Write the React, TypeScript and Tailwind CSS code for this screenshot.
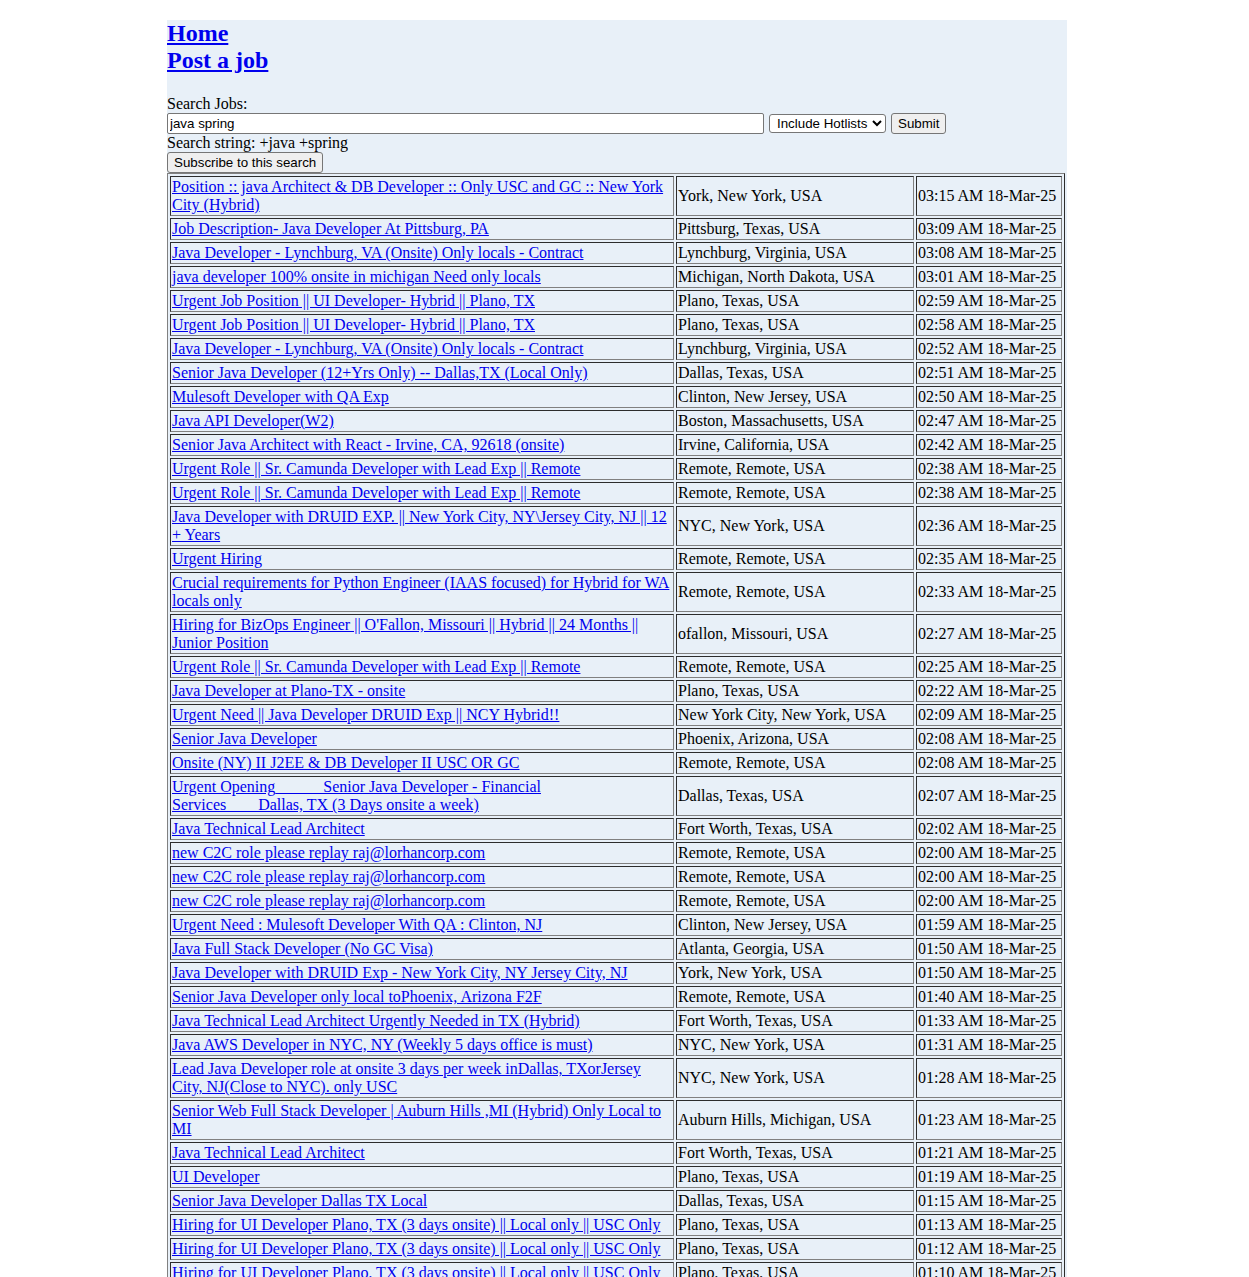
import React from "react";

const jobs: [string, string, string][] = [
  ["Position :: java Architect & DB Developer :: Only USC and GC :: New York City (Hybrid)", "York, New York, USA", "03:15 AM 18-Mar-25"],
  ["Job Description- Java Developer At Pittsburg, PA", "Pittsburg, Texas, USA", "03:09 AM 18-Mar-25"],
  ["Java Developer - Lynchburg, VA (Onsite) Only locals - Contract", "Lynchburg, Virginia, USA", "03:08 AM 18-Mar-25"],
  ["java developer 100% onsite in michigan Need only locals", "Michigan, North Dakota, USA", "03:01 AM 18-Mar-25"],
  ["Urgent Job Position || UI Developer- Hybrid || Plano, TX", "Plano, Texas, USA", "02:59 AM 18-Mar-25"],
  ["Urgent Job Position || UI Developer- Hybrid || Plano, TX", "Plano, Texas, USA", "02:58 AM 18-Mar-25"],
  ["Java Developer - Lynchburg, VA (Onsite) Only locals - Contract", "Lynchburg, Virginia, USA", "02:52 AM 18-Mar-25"],
  ["Senior Java Developer (12+Yrs Only) -- Dallas,TX (Local Only)", "Dallas, Texas, USA", "02:51 AM 18-Mar-25"],
  ["Mulesoft Developer with QA Exp", "Clinton, New Jersey, USA", "02:50 AM 18-Mar-25"],
  ["Java API Developer(W2)", "Boston, Massachusetts, USA", "02:47 AM 18-Mar-25"],
  ["Senior Java Architect with React - Irvine, CA, 92618 (onsite)", "Irvine, California, USA", "02:42 AM 18-Mar-25"],
  ["Urgent Role || Sr. Camunda Developer with Lead Exp || Remote", "Remote, Remote, USA", "02:38 AM 18-Mar-25"],
  ["Urgent Role || Sr. Camunda Developer with Lead Exp || Remote", "Remote, Remote, USA", "02:38 AM 18-Mar-25"],
  ["Java Developer with DRUID EXP. || New York City, NY\\Jersey City, NJ || 12 + Years", "NYC, New York, USA", "02:36 AM 18-Mar-25"],
  ["Urgent Hiring", "Remote, Remote, USA", "02:35 AM 18-Mar-25"],
  ["Crucial requirements for Python Engineer (IAAS focused) for Hybrid for WA locals only", "Remote, Remote, USA", "02:33 AM 18-Mar-25"],
  ["Hiring for BizOps Engineer || O'Fallon, Missouri || Hybrid || 24 Months || Junior Position", "ofallon, Missouri, USA", "02:27 AM 18-Mar-25"],
  ["Urgent Role || Sr. Camunda Developer with Lead Exp || Remote", "Remote, Remote, USA", "02:25 AM 18-Mar-25"],
  ["Java Developer at Plano-TX - onsite", "Plano, Texas, USA", "02:22 AM 18-Mar-25"],
  ["Urgent Need || Java Developer DRUID Exp || NCY Hybrid!!", "New York City, New York, USA", "02:09 AM 18-Mar-25"],
  ["Senior Java Developer", "Phoenix, Arizona, USA", "02:08 AM 18-Mar-25"],
  ["Onsite (NY) II J2EE & DB Developer II USC OR GC", "Remote, Remote, USA", "02:08 AM 18-Mar-25"],
  ["Urgent Opening______Senior Java Developer - Financial Services____Dallas, TX (3 Days onsite a week)", "Dallas, Texas, USA", "02:07 AM 18-Mar-25"],
  ["Java Technical Lead Architect", "Fort Worth, Texas, USA", "02:02 AM 18-Mar-25"],
  ["new C2C role please replay raj@lorhancorp.com", "Remote, Remote, USA", "02:00 AM 18-Mar-25"],
  ["new C2C role please replay raj@lorhancorp.com", "Remote, Remote, USA", "02:00 AM 18-Mar-25"],
  ["new C2C role please replay raj@lorhancorp.com", "Remote, Remote, USA", "02:00 AM 18-Mar-25"],
  ["Urgent Need : Mulesoft Developer With QA : Clinton, NJ", "Clinton, New Jersey, USA", "01:59 AM 18-Mar-25"],
  ["Java Full Stack Developer (No GC Visa)", "Atlanta, Georgia, USA", "01:50 AM 18-Mar-25"],
  ["Java Developer with DRUID Exp - New York City, NY Jersey City, NJ", "York, New York, USA", "01:50 AM 18-Mar-25"],
  ["Senior Java Developer only local toPhoenix, Arizona F2F", "Remote, Remote, USA", "01:40 AM 18-Mar-25"],
  ["Java Technical Lead Architect Urgently Needed in TX (Hybrid)", "Fort Worth, Texas, USA", "01:33 AM 18-Mar-25"],
  ["Java AWS Developer in NYC, NY (Weekly 5 days office is must)", "NYC, New York, USA", "01:31 AM 18-Mar-25"],
  ["Lead Java Developer role at onsite 3 days per week inDallas, TXorJersey City, NJ(Close to NYC). only USC", "NYC, New York, USA", "01:28 AM 18-Mar-25"],
  ["Senior Web Full Stack Developer | Auburn Hills ,MI (Hybrid) Only Local to MI", "Auburn Hills, Michigan, USA", "01:23 AM 18-Mar-25"],
  ["Java Technical Lead Architect", "Fort Worth, Texas, USA", "01:21 AM 18-Mar-25"],
  ["UI Developer", "Plano, Texas, USA", "01:19 AM 18-Mar-25"],
  ["Senior Java Developer Dallas TX Local", "Dallas, Texas, USA", "01:15 AM 18-Mar-25"],
  ["Hiring for UI Developer Plano, TX (3 days onsite) || Local only || USC Only", "Plano, Texas, USA", "01:13 AM 18-Mar-25"],
  ["Hiring for UI Developer Plano, TX (3 days onsite) || Local only || USC Only", "Plano, Texas, USA", "01:12 AM 18-Mar-25"],
  ["Hiring for UI Developer Plano, TX (3 days onsite) || Local only || USC Only", "Plano, Texas, USA", "01:10 AM 18-Mar-25"],
  ["Java Developer with Spring Boot - Charlotte, NC (Hybrid)", "Charlotte, North Carolina, USA", "01:08 AM 18-Mar-25"],
  ["Sr. Java Full Stack Developer || Local to TX", "Irving, Texas, USA", "01:05 AM 18-Mar-25"],
  ["Java Microservices Developer - Remote", "Remote, Remote, USA", "01:02 AM 18-Mar-25"],
  ["Java Backend Engineer (Spring, Kafka) - Jersey City, NJ", "Jersey City, New Jersey, USA", "12:58 AM 18-Mar-25"],
  ["Senior Java Developer || Chicago, IL || Onsite", "Chicago, Illinois, USA", "12:51 AM 18-Mar-25"],
];

const cell = "[border-width:1px] [border-style:inset] border-[#808080] p-[1px] align-middle";
const btn = "bg-[#efefef] border border-[#767676] rounded-[3px] px-[6px] py-[1px] text-[13.33px] font-['Liberation_Sans',Arial,sans-serif] text-black leading-[normal]";

export default function App() {
  return (
    <div className="bg-white min-h-screen pt-5 font-['Liberation_Serif','Times_New_Roman',serif] text-[16px] leading-[normal] text-black">
      {/* page area left of the browser scrollbar */}
      <div className="w-[1234px]">
        <div className="w-[900px] mx-auto bg-[#e8f0f8]">
          {/* top links */}
          <div className="text-[24px] font-bold">
            <a href="#" className="text-[#0000ee] underline">Home</a>
          </div>
          <div className="text-[24px] font-bold">
            <a href="#" className="text-[#0000ee] underline">Post a job</a>
          </div>

          {/* search form */}
          <div className="mt-[21px]">Search Jobs:</div>
          <div className="flex items-center gap-[5px] h-[21px]">
            <input
              type="text"
              defaultValue="java spring"
              className="w-[597px] h-[21px] bg-white border border-[#767676] rounded-[2px] px-[2px] text-[13.33px] font-['Liberation_Sans',Arial,sans-serif] text-black"
            />
            <select className="h-[19px] bg-white border border-[#767676] rounded-[3px] pl-[3px] w-[117px] text-[13.33px] font-['Liberation_Sans',Arial,sans-serif] text-black">
              <option>Include Hotlists</option>
              <option>Exclude Hotlists</option>
            </select>
            <button className={btn + " h-[21px]"}>Submit</button>
          </div>
          <div>Search string: +java +spring</div>
          <button className={btn + " h-[21px] block"}>Subscribe to this search</button>

          {/* results */}
          <table className="table-fixed w-[898px] border-separate border-spacing-[2px] [border-width:1px] [border-style:outset] border-[#808080]">
            <tbody>
              {jobs.map((j, i) => (
                <tr key={i}>
                  <td className={cell + " w-[504px]"}>
                    <a href="#" className="text-[#0000ee] underline">{j[0]}</a>
                  </td>
                  <td className={cell + " w-[238px]"}>{j[1]}</td>
                  <td className={cell + " w-[146px] whitespace-nowrap"}>{j[2]}</td>
                </tr>
              ))}
            </tbody>
          </table>
        </div>
      </div>
    </div>
  );
}
